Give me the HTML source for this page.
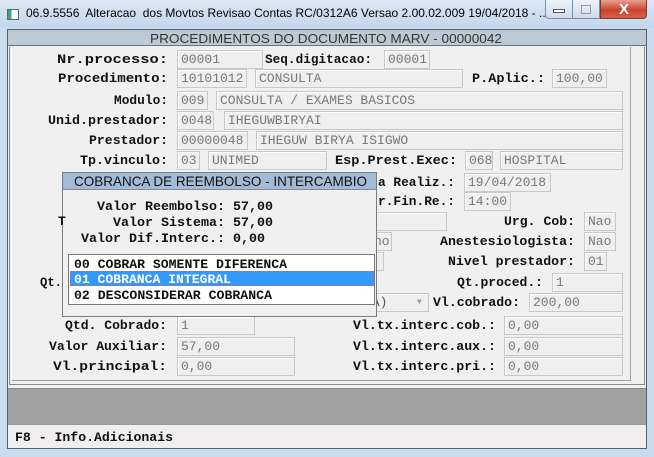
<!DOCTYPE html>
<html><head><meta charset="utf-8"><style>
*{margin:0;padding:0;box-sizing:border-box}
body{width:654px;height:457px;overflow:hidden;background:#c9dbee;position:relative;font-family:"Liberation Mono",monospace}
.a{position:absolute}
.f{position:absolute;height:19px;border:1px solid #c8c8c8;background:#efefef;font:13px "Liberation Mono",monospace;color:#777;line-height:17px;padding-left:3px;white-space:nowrap;overflow:hidden;box-shadow:inset 1px 1px 0 #fff}
svg{position:absolute;left:0;top:0}
svg text{font:bold 13px "Liberation Mono",monospace;fill:#111}
</style></head><body>
<!-- title bar -->
<div class="a" style="left:0;top:0;width:654px;height:28px;background:linear-gradient(#dbe7f4,#c4d7ec)"></div>
<div class="a" style="left:7px;top:9px;width:12px;height:11px;border:1px solid #567;background:linear-gradient(90deg,#3a7 0 35%,#fff 35%)"></div>
<div class="a" style="left:26px;top:6px;font:12px 'Liberation Sans',sans-serif;color:#000;white-space:nowrap">06.9.5556&nbsp; Alteracao&nbsp; dos Movtos Revisao Contas RC/0312A6 Versao 2.00.02.009 19/04/2018 - ...</div>
<div class="a" style="left:545px;top:0;width:28px;height:19px;border:1px solid #7a8ea6;border-top:0;border-radius:0 0 0 4px;background:linear-gradient(#eef3f9,#cfdbe9)"></div>
<div class="a" style="left:553px;top:9px;width:12px;height:4px;border:1px solid #556;background:#fff"></div>
<div class="a" style="left:573px;top:0;width:27px;height:19px;border:1px solid #7a8ea6;border-top:0;border-left:0;background:linear-gradient(#eef3f9,#cfdbe9)"></div>
<div class="a" style="left:581px;top:5px;width:10px;height:9px;border:1px solid #99a"></div>
<div class="a" style="left:600px;top:0;width:47px;height:19px;border:1px solid #7a3a30;border-top:0;border-radius:0 0 4px 0;background:linear-gradient(#e8a090,#c8452e 55%,#d2604a)"></div>
<div class="a" style="left:615px;top:1px;width:18px;font:bold 15px 'Liberation Sans',sans-serif;color:#fff;text-align:center">X</div>
<!-- client -->
<div class="a" style="left:7px;top:29px;width:640px;height:420px;background:#f0f0f0;border:1px solid #5a6068"></div>
<div class="a" style="left:8px;top:30px;width:638px;height:16px;background:#bccad6;border-bottom:1px solid #6a7480"></div>
<div class="a" style="left:9px;top:47px;width:636px;height:338px;border:1px solid #888;border-top:0;background:#f0f0f0"></div>
<div class="a" style="left:11px;top:47px;width:620px;height:334px;border-left:1px solid #fff;border-right:1px solid #a0a0a0;border-bottom:1px solid #a0a0a0"></div>
<div class="a" style="left:8px;top:388px;width:638px;height:36px;background:#a2a2a2;border-top:1px solid #888"></div>
<div class="a" style="left:8px;top:424px;width:638px;height:24px;background:#f0eeee;border-top:1px solid #999"></div>

<!-- fields -->
<div class="f" style="left:177px;top:50px;width:86px">00001</div>
<div class="f" style="left:384px;top:50px;width:46px">00001</div>
<div class="f" style="left:177px;top:69px;width:70px">10101012</div><div class="f" style="left:255px;top:69px;width:208px">CONSULTA</div>
<div class="f" style="left:552px;top:69px;width:55px">100,00</div>
<div class="f" style="left:177px;top:91px;width:31px">009</div><div class="f" style="left:216px;top:91px;width:407px">CONSULTA / EXAMES BASICOS</div>
<div class="f" style="left:177px;top:111px;width:37px">0048</div><div class="f" style="left:224px;top:111px;width:399px">IHEGUWBIRYAI</div>
<div class="f" style="left:177px;top:131px;width:71px">00000048</div><div class="f" style="left:256px;top:131px;width:367px">IHEGUW BIRYA ISIGWO</div>
<div class="f" style="left:177px;top:151px;width:23px">03</div><div class="f" style="left:208px;top:151px;width:119px">UNIMED</div>
<div class="f" style="left:465px;top:151px;width:28px">068</div><div class="f" style="left:500px;top:151px;width:123px">HOSPITAL</div>
<div class="f" style="left:464px;top:173px;width:87px">19/04/2018</div>
<div class="f" style="left:464px;top:192px;width:47px">14:00</div>
<div class="f" style="left:370px;top:212px;width:77px"></div>
<div class="f" style="left:584px;top:212px;width:32px">Nao</div>
<div class="f" style="left:370px;top:232px;width:22px">no</div>
<div class="f" style="left:584px;top:232px;width:32px">Nao</div>
<div class="f" style="left:370px;top:252px;width:14px"></div>
<div class="f" style="left:584px;top:252px;width:23px">01</div>
<div class="f" style="left:552px;top:273px;width:71px">1</div>
<div class="f" style="left:360px;top:293px;width:69px;color:#555">(A)<span style="position:absolute;left:56px;top:0;font-size:8px;color:#999">▼</span></div>
<div class="f" style="left:529px;top:293px;width:94px">200,00</div>
<div class="f" style="left:177px;top:316px;width:78px">1</div>
<div class="f" style="left:504px;top:316px;width:119px">0,00</div>
<div class="f" style="left:177px;top:337px;width:118px">57,00</div>
<div class="f" style="left:504px;top:337px;width:119px">0,00</div>
<div class="f" style="left:177px;top:357px;width:118px">0,00</div>
<div class="f" style="left:504px;top:357px;width:119px">0,00</div>

<!-- popup -->
<div class="a" style="left:62px;top:172px;width:315px;height:145px;background:#f0f0f0;border:1px solid #7a7a7a"></div>
<div class="a" style="left:63px;top:173px;width:313px;height:17px;background:#a3bcd6;border-bottom:1px solid #889"></div>
<div class="a" style="left:68px;top:254px;width:307px;height:51px;background:#fff;border:1px solid #777"></div>
<div class="a" style="left:70px;top:271px;width:304px;height:15px;background:#3399ff;border:1px dotted #c07030"></div>

<svg width="654" height="457">
<g style="font:13px 'Liberation Sans',sans-serif">
<text x="150" y="43" textLength="352" lengthAdjust="spacingAndGlyphs" style="font:13px 'Liberation Sans',sans-serif;fill:#333">PROCEDIMENTOS DO DOCUMENTO MARV - 00000042</text>
<text x="74" y="186" textLength="293" lengthAdjust="spacingAndGlyphs" style="font:14px 'Liberation Sans',sans-serif;fill:#111">COBRANCA DE REEMBOLSO - INTERCAMBIO</text>
</g>
<g lengthAdjust="spacingAndGlyphs">
<text x="57" y="63" textLength="111" lengthAdjust="spacingAndGlyphs">Nr.processo:</text>
<text x="265" y="63" textLength="107" lengthAdjust="spacingAndGlyphs">Seq.digitacao:</text>
<text x="58" y="82" textLength="110" lengthAdjust="spacingAndGlyphs">Procedimento:</text>
<text x="472" y="82" textLength="73" lengthAdjust="spacingAndGlyphs">P.Aplic.:</text>
<text x="114" y="104" textLength="54" lengthAdjust="spacingAndGlyphs">Modulo:</text>
<text x="48" y="124" textLength="120" lengthAdjust="spacingAndGlyphs">Unid.prestador:</text>
<text x="89" y="144" textLength="79" lengthAdjust="spacingAndGlyphs">Prestador:</text>
<text x="80" y="164" textLength="88" lengthAdjust="spacingAndGlyphs">Tp.vinculo:</text>
<text x="335" y="164" textLength="122" lengthAdjust="spacingAndGlyphs">Esp.Prest.Exec:</text>
<text x="378" y="186" textLength="77" lengthAdjust="spacingAndGlyphs">a Realiz.:</text>
<text x="378" y="205" textLength="77" lengthAdjust="spacingAndGlyphs">r.Fin.Re.:</text>
<text x="58" y="225">T</text>
<text x="504" y="225" textLength="71" lengthAdjust="spacingAndGlyphs">Urg. Cob:</text>
<text x="440" y="245" textLength="135" lengthAdjust="spacingAndGlyphs">Anestesiologista:</text>
<text x="448" y="265" textLength="127" lengthAdjust="spacingAndGlyphs">Nivel prestador:</text>
<text x="40" y="286" textLength="22" lengthAdjust="spacingAndGlyphs">Qt.</text>
<text x="457" y="286" textLength="86" lengthAdjust="spacingAndGlyphs">Qt.proced.:</text>
<text x="433" y="306" textLength="87" lengthAdjust="spacingAndGlyphs">Vl.cobrado:</text>
<text x="65" y="329" textLength="102" lengthAdjust="spacingAndGlyphs">Qtd. Cobrado:</text>
<text x="353" y="329" textLength="143" lengthAdjust="spacingAndGlyphs">Vl.tx.interc.cob.:</text>
<text x="49" y="350" textLength="118" lengthAdjust="spacingAndGlyphs">Valor Auxiliar:</text>
<text x="353" y="350" textLength="143" lengthAdjust="spacingAndGlyphs">Vl.tx.interc.aux.:</text>
<text x="53" y="370" textLength="114" lengthAdjust="spacingAndGlyphs">Vl.principal:</text>
<text x="353" y="370" textLength="143" lengthAdjust="spacingAndGlyphs">Vl.tx.interc.pri.:</text>
<text x="97" y="210" textLength="176" lengthAdjust="spacingAndGlyphs">Valor Reembolso: 57,00</text>
<text x="113" y="226" textLength="160" lengthAdjust="spacingAndGlyphs">Valor Sistema: 57,00</text>
<text x="81" y="242" textLength="184" lengthAdjust="spacingAndGlyphs">Valor Dif.Interc.: 0,00</text>
<text x="74" y="268" textLength="213" lengthAdjust="spacingAndGlyphs">00 COBRAR SOMENTE DIFERENCA</text>
<text x="74" y="283" textLength="157" lengthAdjust="spacingAndGlyphs" style="fill:#fff">01 COBRANCA INTEGRAL</text>
<text x="74" y="299" textLength="198" lengthAdjust="spacingAndGlyphs">02 DESCONSIDERAR COBRANCA</text>
<text x="15" y="441" textLength="158" lengthAdjust="spacingAndGlyphs">F8 - Info.Adicionais</text>
</g>
</svg>
</body></html>
